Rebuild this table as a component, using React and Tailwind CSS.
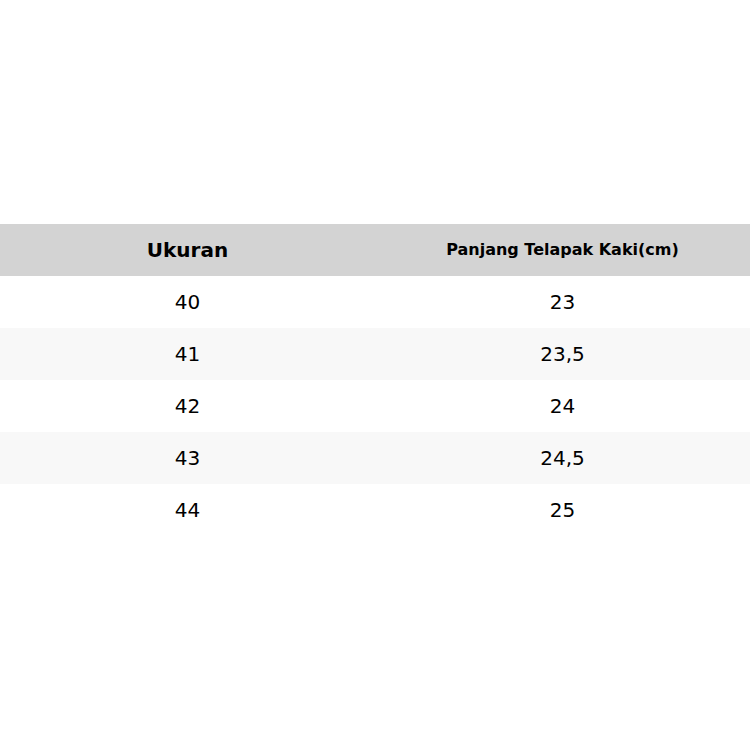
const ROWS = [
  ['40', '23'],
  ['41', '23,5'],
  ['42', '24'],
  ['43', '24,5'],
  ['44', '25'],
];

export default function App() {
  return (
    <div className="min-h-[750px] w-[750px] bg-white pt-[224px] font-['DejaVu_Sans',sans-serif] text-black">
      <table className="w-full table-fixed border-collapse">
        <thead>
          <tr className="h-[52px] bg-[#d3d3d3]">
            <th className="text-[20px] font-bold">Ukuran</th>
            <th className="text-[16px] font-bold">Panjang Telapak Kaki(cm)</th>
          </tr>
        </thead>
        <tbody>
          {ROWS.map(([size, length], i) => (
            <tr key={size} className={`h-[52px] ${i % 2 === 1 ? 'bg-[#f8f8f8]' : 'bg-white'}`}>
              <td className="text-center text-[20px]">{size}</td>
              <td className="text-center text-[20px]">{length}</td>
            </tr>
          ))}
        </tbody>
      </table>
    </div>
  );
}
